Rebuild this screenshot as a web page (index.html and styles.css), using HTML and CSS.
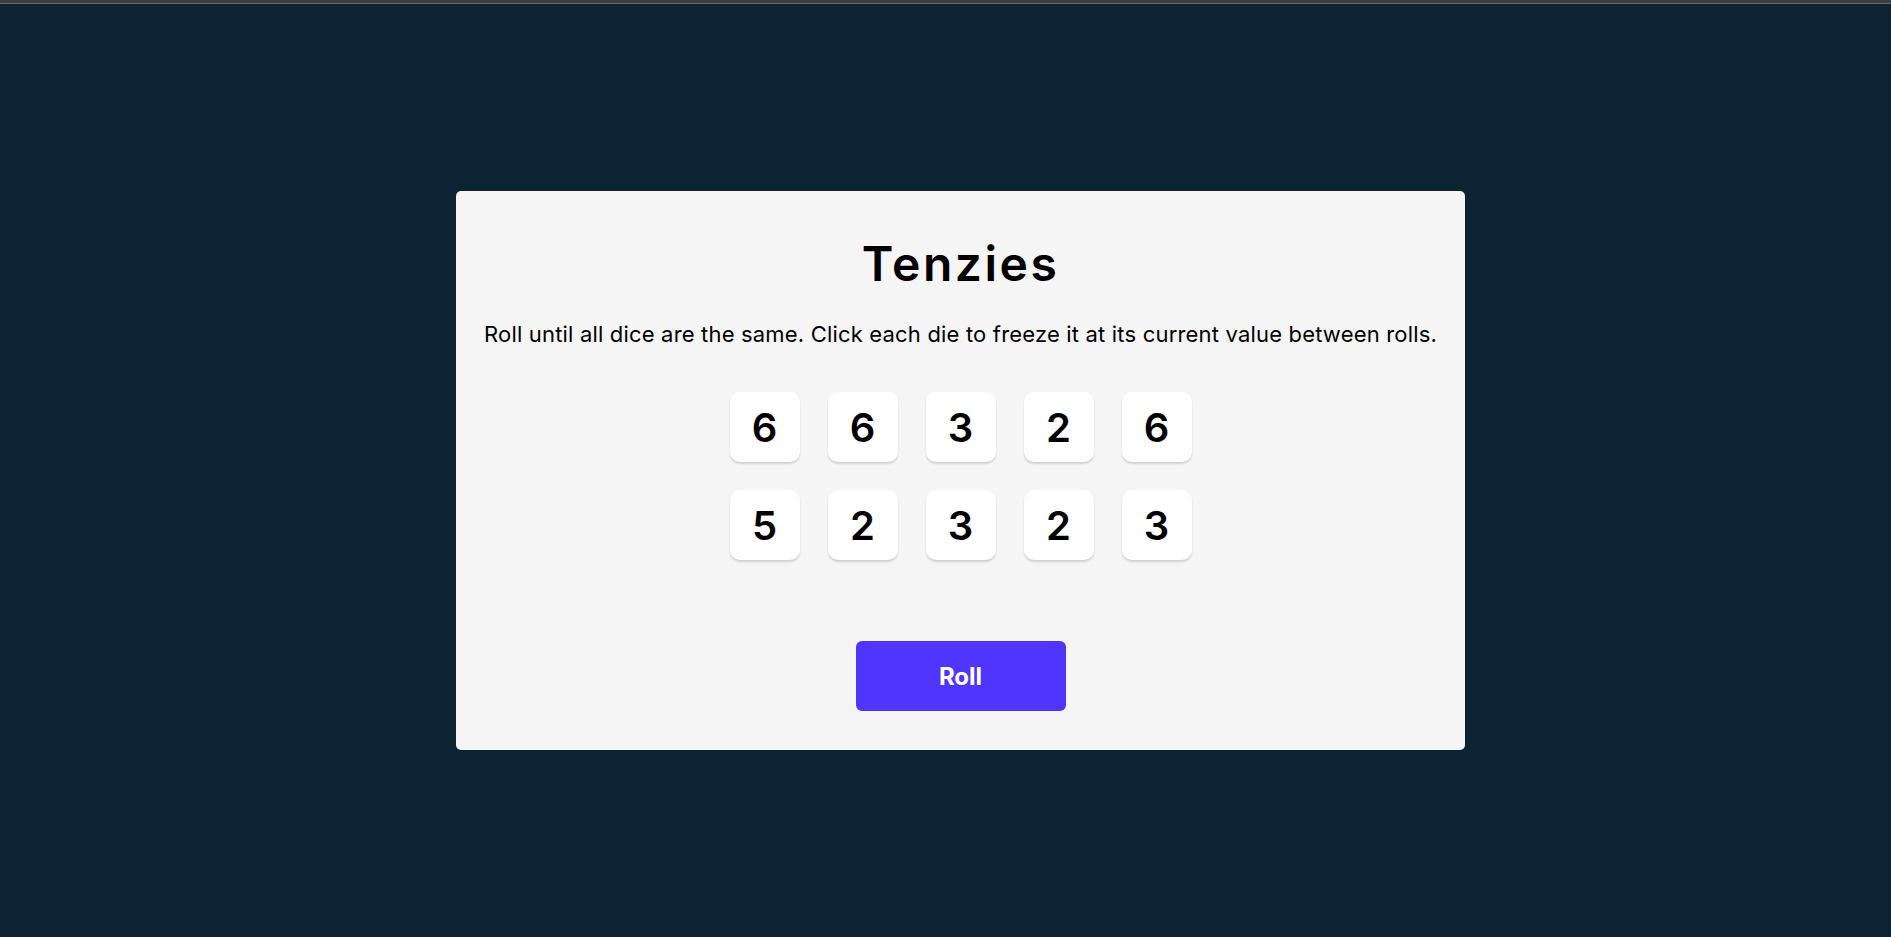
FILE: index.html
```html
<!DOCTYPE html>
<html lang="en">
<head>
<meta charset="utf-8">
<title>Tenzies</title>
<link rel="stylesheet" href="styles.css">
</head>
<body>
<div class="topbar"></div>
<main class="stage">
  <section class="card">
    <h1 class="title">Tenzies</h1>
    <p class="instructions">Roll until all dice are the same. Click each die to freeze it at its current value between rolls.</p>
    <div class="dice">
      <button class="die">6</button>
      <button class="die">6</button>
      <button class="die">3</button>
      <button class="die">2</button>
      <button class="die">6</button>
      <button class="die">5</button>
      <button class="die">2</button>
      <button class="die">3</button>
      <button class="die">2</button>
      <button class="die">3</button>
    </div>
    <button class="roll">Roll</button>
  </section>
</main>
</body>
</html>
```
FILE: styles.css
```css
* { box-sizing: border-box; }
html, body { margin: 0; padding: 0; }
body {
  background: #0B2434;
  font-family: Inter, "Noto Sans", sans-serif;
  height: 937px;
  overflow: hidden;
  display: flex;
  flex-direction: column;
}
.topbar {
  height: 4px;
  background: #3e3e3e;
  border-bottom: 1px solid #6b6b6b;
  flex: none;
}
.stage {
  flex: 1;
  display: flex;
  align-items: center;
  justify-content: center;
  padding-left: 30px;
}
.card {
  width: 1009px;
  height: 559px;
  background: #F5F5F5;
  border-radius: 5px;
  display: flex;
  flex-direction: column;
  align-items: center;
  padding-top: 44px;
}
.title {
  margin: 0;
  font-size: 48px;
  line-height: 58px;
  font-weight: 600;
  letter-spacing: 2.5px;
  color: #000;
}
.instructions {
  margin: 28px 0 0;
  font-size: 22px;
  line-height: 26px;
  font-weight: 400;
  letter-spacing: 0.18px;
  color: #000;
  white-space: nowrap;
}
.dice {
  margin-top: 45px;
  display: grid;
  grid-template-columns: repeat(5, 70px);
  grid-auto-rows: 70px;
  column-gap: 28px;
  row-gap: 28px;
}
.die {
  border: none;
  background: #fff;
  border-radius: 10px;
  box-shadow: 0 2px 2px rgba(0, 0, 0, 0.15);
  font-family: Inter, "Noto Sans", sans-serif;
  font-size: 40px;
  font-weight: 600;
  color: #000;
  padding: 0;
  display: flex;
  align-items: center;
  justify-content: center;
}
.roll {
  margin-top: 81px;
  width: 210px;
  height: 70px;
  border: none;
  border-radius: 6px;
  background: #5035FF;
  color: #fff;
  font-family: Inter, "Noto Sans", sans-serif;
  font-size: 24px;
  font-weight: 700;
}
```
